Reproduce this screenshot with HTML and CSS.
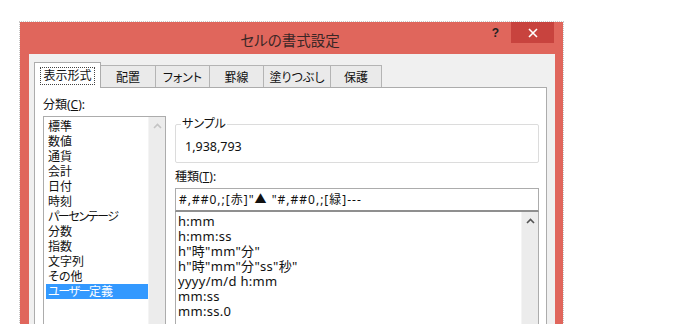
FILE: index.html
```html
<!DOCTYPE html>
<html lang="ja">
  <head>
    <meta charset="utf-8">
    <title>セルの書式設定</title>
    <link rel="stylesheet" href="styles.css">
  </head>
  <body>
    <div class="window">
      <div class="titlebar">
        <span class="title">セルの書式設定</span>
        <span class="help">?</span>
        <span class="close">
          <svg width="12" height="12" viewBox="0 0 12 12">
            <path d="M2 2 L10 10 M10 2 L2 10" stroke="#fff" stroke-width="1.6" fill="none" />
          </svg>
        </span>
      </div>

      <div class="client">
        <div class="tabs">
          <div class="tab active"><span class="focus">表示形式</span></div>
          <div class="tab">配置</div>
          <div class="tab">フォント</div>
          <div class="tab">罫線</div>
          <div class="tab wide">塗りつぶし</div>
          <div class="tab last">保護</div>
        </div>

        <div class="panel">
          <div class="col-left">
            <div class="label">分類(<u>C</u>):</div>
            <div class="listbox category">
              <div class="items">
                <div class="item">標準</div>
                <div class="item">数値</div>
                <div class="item">通貨</div>
                <div class="item">会計</div>
                <div class="item">日付</div>
                <div class="item">時刻</div>
                <div class="item kana">パーセンテージ</div>
                <div class="item">分数</div>
                <div class="item">指数</div>
                <div class="item">文字列</div>
                <div class="item">その他</div>
                <div class="item selected"><span class="kana">ユーザー</span>定義</div>
              </div>
              <div class="scrollbar">
                <svg class="arrow" width="9" height="6" viewBox="0 0 9 6">
                  <path d="M1 5 L4.5 1.5 L8 5" stroke="#c4c4c4" stroke-width="1.6" fill="none" />
                </svg>
              </div>
            </div>
          </div>

          <div class="col-right">
            <div class="sample">
              <span class="legend">サンプル</span>
              <div class="sample-value">1,938,793</div>
            </div>
            <div class="label kind">種類(<u>T</u>):</div>
            <div class="textbox">#,##0,;[赤]"▲ "#,##0,;[緑]---</div>
            <div class="listbox formats">
              <div class="items">
                <div class="item">h:mm</div>
                <div class="item">h:mm:ss</div>
                <div class="item">h"時"mm"分"</div>
                <div class="item">h"時"mm"分"ss"秒"</div>
                <div class="item">yyyy/m/d h:mm</div>
                <div class="item">mm:ss</div>
                <div class="item">mm:ss.0</div>
              </div>
              <div class="scrollbar">
                <svg class="arrow" width="9" height="6" viewBox="0 0 9 6">
                  <path d="M1 5 L4.5 1.5 L8 5" stroke="#555" stroke-width="1.6" fill="none" />
                </svg>
              </div>
            </div>
          </div>
        </div>
      </div>
    </div>
  </body>
</html>
```

FILE: styles.css
```css
*,
*:before,
*:after {
  box-sizing: border-box;
}

body {
  margin: 0;
  height: 324px;
  overflow: hidden;
  background-color: #fff;
  font-family: "Noto Sans", "Noto Sans CJK JP", sans-serif;
  font-size: 12px;
  color: #111;
  font-feature-settings: "palt";
}

.window {
  margin: 22px 0 0 20px;
  width: 543px;
  height: 320px;
  background-color: #e0665c;
  outline: 1px dotted #c8c8c8;
  display: flex;
  flex-direction: column;
  padding: 0 8px 0 9px;
}

.titlebar {
  height: 32px;
  position: relative;
  display: flex;
  justify-content: center;
  align-items: center;
}

.title {
  font-size: 14.5px;
  color: #3a2626;
  margin-left: -4px;
  margin-top: 3px;
}

.help {
  position: absolute;
  right: 56px;
  top: 4px;
  font-family: "Liberation Sans", sans-serif;
  font-weight: bold;
  font-size: 12px;
  color: #222;
}

.close {
  position: absolute;
  right: 1px;
  top: 0;
  width: 43px;
  height: 21px;
  background-color: #c8433e;
  display: flex;
  justify-content: center;
  align-items: center;
}

.client {
  flex: 1;
  background-color: #f0f0f0;
  padding: 8px 8px 0 5px;
  display: flex;
  flex-direction: column;
}

.tabs {
  display: flex;
  align-items: flex-end;
  height: 25px;
  position: relative;
  z-index: 1;
}

.tab {
  flex: none;
  width: 54px;
  height: 22px;
  border: 1px solid #b4b4b4;
  border-right: none;
  border-bottom: none;
  background-color: #eaeaea;
  display: flex;
  justify-content: center;
  align-items: center;
}

.tab.wide {
  width: 67px;
}

.tab.last {
  width: 52px;
  border-right: 1px solid #b4b4b4;
}

.tab.active {
  width: 67px;
  height: 26px;
  margin-bottom: -1px;
  background-color: #fff;
  border: 1px solid #acacac;
  border-bottom: none;
}

.tab.active + .tab {
  border-left: none;
}

.focus {
  outline: 1px dotted #444;
  padding: 0 2px;
  line-height: 16px;
}

.panel {
  flex: 1;
  background-color: #fff;
  border: 1px solid #acacac;
  padding: 9px 7px 0 8px;
  display: flex;
  gap: 9px;
}

.label {
  height: 19px;
  line-height: 16px;
}

.col-left {
  width: 123px;
  display: flex;
  flex-direction: column;
}

.col-right {
  flex: 1;
  padding-top: 27px;
  display: flex;
  flex-direction: column;
}

.listbox {
  flex: 1;
  border: 1px solid #acacac;
  display: flex;
  min-height: 0;
}

.items {
  flex: 1;
  padding: 2px 0 0 2px;
}

.item {
  height: 15px;
  line-height: 15px;
  padding-left: 2px;
  white-space: nowrap;
}

.kana {
  letter-spacing: -1.4px;
}

.item.selected {
  background-color: #3399ff;
  color: #fff;
}

.scrollbar {
  width: 17px;
  background-color: #ececec;
  border-left: 1px solid #f4f4f4;
  display: flex;
  flex-direction: column;
  align-items: center;
  padding-top: 6px;
}

.sample {
  position: relative;
  height: 39px;
  border: 1px solid #dcdcdc;
  border-radius: 2px;
  padding: 14px 0 0 9px;
}

.legend {
  position: absolute;
  left: 5px;
  top: -9px;
  padding: 0 1px;
  background-color: #fff;
  line-height: 16px;
}

.sample-value {
  font-size: 12.5px;
  line-height: 16px;
}

.label.kind {
  margin-top: 6px;
  height: 19px;
}

.textbox {
  height: 24px;
  border: 1px solid #acacac;
  border-bottom: 2px solid #8f8f8f;
  padding: 3px 0 0 3px;
  line-height: 16px;
  letter-spacing: 1px;
  white-space: nowrap;
}

.listbox.formats {
  border-top: none;
}

.formats .items {
  padding-top: 2px;
  padding-left: 0;
  font-size: 13px;
  letter-spacing: 0.3px;
}
```
